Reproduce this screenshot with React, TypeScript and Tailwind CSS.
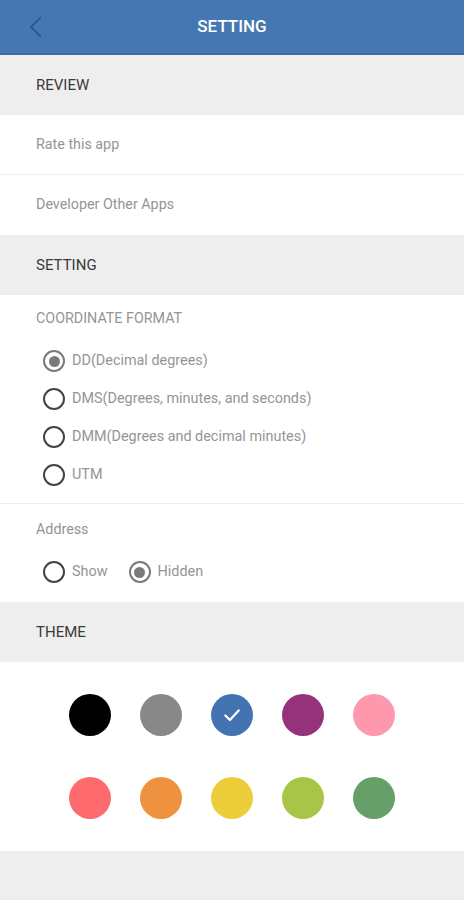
import React, { useState } from "react";

const formats = [
    "DD(Decimal degrees)",
    "DMS(Degrees, minutes, and seconds)",
    "DMM(Degrees and decimal minutes)",
    "UTM",
];

const themeColors = [
    "bg-[#000000]",
    "bg-[#888888]",
    "bg-[#4373b0]",
    "bg-[#96327c]",
    "bg-[#fd98ad]",
    "bg-[#fe6b6e]",
    "bg-[#ee9240]",
    "bg-[#eecd3a]",
    "bg-[#a8c548]",
    "bg-[#66a068]",
];

const SectionHeader: React.FC<{ title: string }> = ({ title }) => (
    <div className="flex h-[60px] items-center bg-[#eeeeee] px-9 text-[15px] text-[#3a3a3a]">
        {title}
    </div>
);

const Radio: React.FC<{ checked: boolean; label: string; onClick: () => void }> = ({ checked, label, onClick }) => (
    <button onClick={onClick} className="flex h-[22px] items-center gap-[7px]">
        <span
            className={`flex h-[22px] w-[22px] shrink-0 items-center justify-center rounded-full border-2 ${checked ? "border-[#7a7a7a]" : "border-[#444444]"}`}
        >
            {checked && <span className="h-[11px] w-[11px] rounded-full bg-[#7a7a7a]" />}
        </span>
        <span className="text-[14.4px] leading-[22px] text-[#959595]">{label}</span>
    </button>
);

export default function App() {
    const [format, setFormat] = useState(0);
    const [showAddress, setShowAddress] = useState(false);
    const [theme, setTheme] = useState(2);

    return (
        <div className="flex min-h-[900px] w-full flex-col bg-[#eeeeee]" style={{ fontFamily: "Roboto, 'Noto Sans', sans-serif" }}>
            {/* top bar */}
            <div className="relative flex h-[55px] items-center justify-center border-b-2 border-[#3a68a3] bg-[#4577b3]">
                <svg className="absolute left-[28px] top-[15px]" width="16" height="24" viewBox="0 0 16 24" fill="none">
                    <path d="M13 2 L3 12 L13 22" stroke="#24508a" strokeWidth="1.5" />
                </svg>
                <span className="text-[17px] font-medium text-white">SETTING</span>
            </div>

            <SectionHeader title="REVIEW" />
            <div className="bg-white">
                <div className="flex h-[60px] items-center border-b border-[#f0f0f0] px-9 text-[14.3px] text-[#959595]">
                    Rate this app
                </div>
                <div className="flex h-[60px] items-center px-9 text-[14.3px] text-[#959595]">
                    Developer Other Apps
                </div>
            </div>

            <SectionHeader title="SETTING" />
            <div className="bg-white">
                <div className="border-b border-[#eeeeee] px-9 pb-[17px] pt-[13px]">
                    <div className="text-[14.3px] leading-[20px] text-[#959595]">COORDINATE FORMAT</div>
                    <div className="mt-[22px] flex flex-col gap-[16px] pl-[7px]">
                        {formats.map((f, i) => (
                            <Radio key={f} checked={format === i} label={f} onClick={() => setFormat(i)} />
                        ))}
                    </div>
                </div>
                <div className="px-9 pb-[19px] pt-[15px]">
                    <div className="text-[14.3px] leading-[20px] text-[#959595]">Address</div>
                    <div className="mt-[22px] flex gap-[21px] pl-[7px]">
                        <Radio checked={showAddress} label="Show" onClick={() => setShowAddress(true)} />
                        <Radio checked={!showAddress} label="Hidden" onClick={() => setShowAddress(false)} />
                    </div>
                </div>
            </div>

            <SectionHeader title="THEME" />
            <div className="bg-white pb-[32px] pt-[32px]">
                <div className="mx-auto grid w-[355px] grid-cols-5 gap-y-[41px]">
                    {themeColors.map((c, i) => (
                        <button
                            key={c}
                            onClick={() => setTheme(i)}
                            className={`flex h-[42px] w-[42px] items-center justify-center justify-self-center rounded-full ${c}`}
                        >
                            {theme === i && (
                                <svg width="20" height="20" viewBox="0 0 24 24" fill="none">
                                    <path d="M4 12.5 L9.5 18 L20 6.5" stroke="white" strokeWidth="2.6" strokeLinecap="round" strokeLinejoin="round" />
                                </svg>
                            )}
                        </button>
                    ))}
                </div>
            </div>
        </div>
    );
}
